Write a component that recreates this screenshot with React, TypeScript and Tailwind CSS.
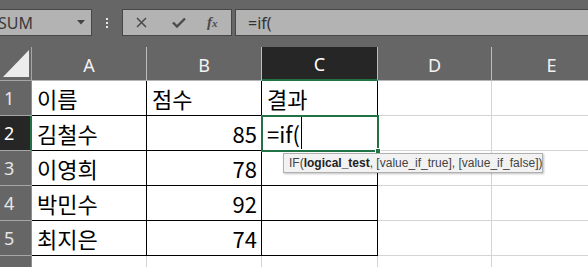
import React from "react";

const cols = [
  { l: "A", w: "w-[115px]" },
  { l: "B", w: "w-[115px]" },
  { l: "C", w: "w-[116px]" },
  { l: "D", w: "w-[114px]" },
  { l: "E", w: "w-[120px]" },
];

const data: [string, string][] = [
  ["이름", "점수"],
  ["김철수", "85"],
  ["이영희", "78"],
  ["박민수", "92"],
  ["최지은", "74"],
];

const cellFont = { fontFamily: '"Noto Sans CJK KR", "Noto Sans", sans-serif' };

export default function App() {
  return (
    <div
      className="relative w-[588px] h-[267px] overflow-hidden bg-white"
      style={{ fontFamily: '"Noto Sans", "Noto Sans CJK KR", sans-serif' }}
    >
      {/* Top bar */}
      <div className="h-[47px] bg-[#666666] flex items-start pt-[9px]">
        <div className="ml-[-10px] w-[102px] h-[27px] border border-[#474747] bg-[#b3b3b3] flex items-center shrink-0">
          <span className="pl-[7px] text-[16px] text-[#3a3a3a] leading-none">SUM</span>
          <svg className="ml-auto mr-[6px]" width="8" height="5" viewBox="0 0 8 5">
            <path d="M0 0 L8 0 L4 4.5 Z" fill="#444" />
          </svg>
        </div>
        <div className="w-[30px] h-[27px] flex flex-col items-center justify-center gap-[2px] shrink-0">
          <span className="w-[2px] h-[2px] bg-[#e6e6e6]" />
          <span className="w-[2px] h-[2px] bg-[#e6e6e6]" />
          <span className="w-[2px] h-[2px] bg-[#e6e6e6]" />
        </div>
        <div className="w-[110px] h-[27px] border border-[#474747] bg-[#b3b3b3] flex items-center shrink-0">
          <svg className="ml-[13px]" width="11" height="11" viewBox="0 0 11 11">
            <path d="M1 1 L10 10 M10 1 L1 10" stroke="#4a4a4a" strokeWidth="1.5" />
          </svg>
          <svg className="ml-[25px]" width="14" height="11" viewBox="0 0 14 11">
            <path d="M1 5.5 L5 9.5 L13 1.5" stroke="#4a4a4a" strokeWidth="2.4" fill="none" />
          </svg>
          <span
            className="ml-[21px] text-[15px] italic font-bold text-[#4a4a4a] leading-none"
            style={{ fontFamily: '"Liberation Serif", serif' }}
          >
            f<span className="text-[11px]">x</span>
          </span>
        </div>
        <div className="ml-[3px] flex-1 mr-[-10px] h-[27px] border border-[#474747] bg-[#b3b3b3] flex items-center">
          <span className="pl-[12px] text-[16px] text-[#333] leading-none">=if(</span>
        </div>
      </div>

      {/* Column header */}
      <div className="flex h-[34px] bg-[#666666]">
        <div className="w-[32px] h-[34px] shrink-0 border-r border-b border-[#a6a6a6] flex items-end justify-start">
          <svg width="31" height="33" viewBox="0 0 31 33">
            <path d="M3 30 L29 30 L29 3 Z" fill="#ececec" />
          </svg>
        </div>
        {cols.map((c) => (
          <div
            key={c.l}
            className={`${c.w} shrink-0 h-[34px] flex items-center justify-center pt-[3px] text-[18px] border-r ${
              c.l === "C"
                ? "bg-[#262626] border-r-[#bdbdbd] border-b-2 border-b-[#217346] text-white"
                : "border-[#bdbdbd] border-b border-b-[#b5b5b5] text-[#f2f2f2]"
            }`}
          >
            {c.l}
          </div>
        ))}
      </div>

      {/* Rows */}
      {[1, 2, 3, 4, 5, 6].map((r) => {
        const row = data[r - 1];
        const sel = r === 2;
        return (
          <div key={r} className="flex h-[35px]">
            <div
              className={`w-[32px] shrink-0 h-[35px] flex items-center pl-[4px] text-[18px] border-b border-b-[#a6a6a6] ${
                sel
                  ? "bg-[#262626] text-white border-r-2 border-r-[#217346]"
                  : "bg-[#666666] text-[#e6e6e6] border-r border-r-[#8f8f8f]"
              }`}
            >
              {r <= 5 ? r : null}
            </div>
            {cols.map((c, ci) => {
              const inTable = row && ci < 3;
              const border = inTable
                ? "border-r border-b border-black"
                : r === 6 && ci < 3
                ? "border-r border-[#d4d4d4]"
                : "border-r border-b border-[#d4d4d4]";
              let content: React.ReactNode = null;
              let align = "justify-start pl-[5px]";
              if (row && ci === 0) content = row[0];
              if (row && ci === 1) {
                content = row[1];
                if (r > 1) align = "justify-end pr-[4px]";
                else align = "justify-start pl-[5px]";
              }
              if (r === 1 && ci === 2) content = "결과";
              if (r === 2 && ci === 2)
                content = (
                  <span className="flex items-center">
                    =if(<span className="inline-block w-px h-[32px] bg-black ml-[1px]" />
                  </span>
                );
              return (
                <div
                  key={c.l}
                  className={`${c.w} shrink-0 h-[35px] flex items-center ${align} ${border} text-[22px] text-black leading-none`}
                  style={cellFont}
                >
                  {content}
                </div>
              );
            })}
          </div>
        );
      })}

      {/* Active cell */}
      <div className="absolute left-[261px] top-[115px] w-[118px] h-[37px] border-2 border-[#217346] pointer-events-none" />
      <div className="absolute left-[375px] top-[148px] w-[6px] h-[6px] bg-[#217346] border border-white" />

      {/* Tooltip */}
      <div
        className="absolute left-[283px] top-[153px] h-[20px] w-[260px] bg-[#f2f2f2] border border-[#b0b0b0] shadow-[1px_1px_2px_rgba(0,0,0,0.25)] flex items-center pl-[5px] text-[12px] text-[#444] whitespace-nowrap"
        style={{ fontFamily: '"Liberation Sans", Arial, sans-serif' }}
      >
        IF(<b className="text-[#222]">logical_test</b>, [value_if_true], [value_if_false])
      </div>
    </div>
  );
}
